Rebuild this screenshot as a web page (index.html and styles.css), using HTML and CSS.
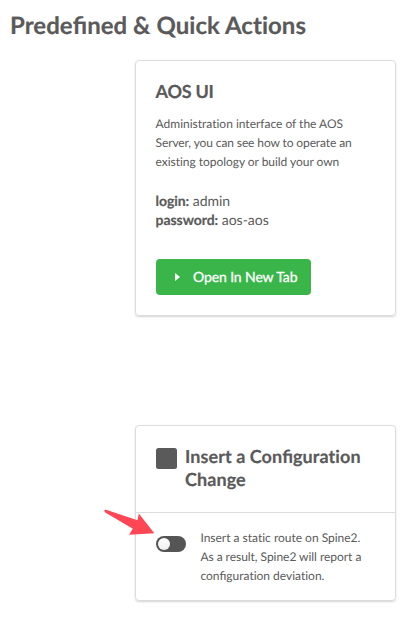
FILE: index.html
```html
<!DOCTYPE html>
<html lang="en">
<head>
<meta charset="utf-8">
<title>Predefined &amp; Quick Actions</title>
<link rel="stylesheet" href="styles.css">
</head>
<body>
<h1 class="title">Prede<span class="lig">fi</span>ned &amp; Quick Actions</h1>
<main class="cards">
  <section class="card card-ui">
    <h2 class="heading heading-ui">AOS UI</h2>
    <p class="text">Administration interface of the AOS<br><span class="tight">Server, you can see how to operate an</span><br><span class="snug">existing topology or build your own</span></p>
    <p class="creds"><b>login:</b> admin<br><b>password:</b> aos-aos</p>
    <button class="button"><svg class="caret" viewBox="0 0 5 8"><path d="M0 0L5 4L0 8Z"/></svg>Open In New Tab</button>
  </section>
  <section class="card card-config">
    <header class="config-head"><span class="square"></span><h2 class="heading">Insert a Con<span class="lig">fi</span>guration<br>Change</h2></header>
    <div class="config-body">
      <span class="toggle"><svg class="arrow" viewBox="0 0 56 32"><path d="M4.3 4.5Q4.6 3.4 6 3.8L37.5 14.3L38.8 7.4L54.3 27.2L29 28.8L32.8 22.8L5.3 6.5Q4.2 5.6 4.3 4.5Z"/></svg></span>
      <p class="text">Insert a static route on Spine2.<br><span class="snug">As a result, Spine2 will report a</span><br>con<span class="lig">fi</span>guration deviation.</p>
    </div>
  </section>
</main>
</body>
</html>
```
FILE: styles.css
```css
* { box-sizing: border-box; }
body { margin: 0; height: 618px; overflow: hidden; background: #fff; color: #5a5a5a; font-family: Lato, sans-serif; text-rendering: geometricPrecision; letter-spacing: -0.01px; }
h1, h2, p { margin: 0; }
.lig { letter-spacing: 0; }
.tight { letter-spacing: -0.11px; }
.snug { letter-spacing: -0.04px; }
.title { padding: 11px 0 0 10px; font-size: 24px; line-height: 30px; font-weight: 700; letter-spacing: 0.04px; white-space: nowrap; -webkit-text-stroke: 0.2px #5a5a5a; }
.cards { margin: 19px 0 0 135px; width: 261px; }
.card { border: 1px solid #dcdddd; border-radius: 4px; box-shadow: 0 1px 2px #d4d4d5; }
.card-ui { height: 256px; padding: 19px 19.6px; }
.heading { font-size: 18px; line-height: 23px; font-weight: 700; letter-spacing: 0.07px; white-space: nowrap; -webkit-text-stroke: 0.2px #5a5a5a; }
.heading-ui { letter-spacing: -0.25px; }
.text { font-size: 12px; line-height: 19px; white-space: nowrap; }
.card-ui .text { margin-top: 11px; }
.creds { margin-top: 20px; font-size: 14px; line-height: 19px; }
.creds b { letter-spacing: -0.06px; -webkit-text-stroke: 0.2px #5a5a5a; }
.button { display: flex; align-items: center; width: 155px; height: 36px; margin: 30px 0 0 0.4px; padding: 0 0 1px 19px; gap: 13px; border: 0; border-radius: 4px; background: #39b54a; color: #fff; font: 14px Lato, sans-serif; letter-spacing: -0.11px; text-rendering: inherit; -webkit-text-stroke: 0.3px #fff; white-space: nowrap; }
.caret { width: 5px; height: 8px; fill: #fff; }
.card-config { height: 176px; margin-top: 109px; }
.config-head { display: flex; gap: 8px; height: 87px; padding: 19px 0 0 20px; border-bottom: 1px solid #dcdddd; }
.square { width: 21px; height: 21px; margin-top: 3px; border-radius: 2.5px; background: #5a5a5a; }
.config-body { display: flex; gap: 14.4px; padding: 15px 0 0 20px; }
.toggle { position: relative; width: 30px; height: 16px; margin-top: 8px; border-radius: 8px; background: #555; }
.toggle::before { content: ""; position: absolute; left: 2px; top: 2px; width: 12px; height: 12px; border-radius: 50%; background: linear-gradient(#fff, #f0f0f0); }
.arrow { position: absolute; left: -56px; top: -30px; width: 56px; height: 32px; fill: #ff4655; }
```
